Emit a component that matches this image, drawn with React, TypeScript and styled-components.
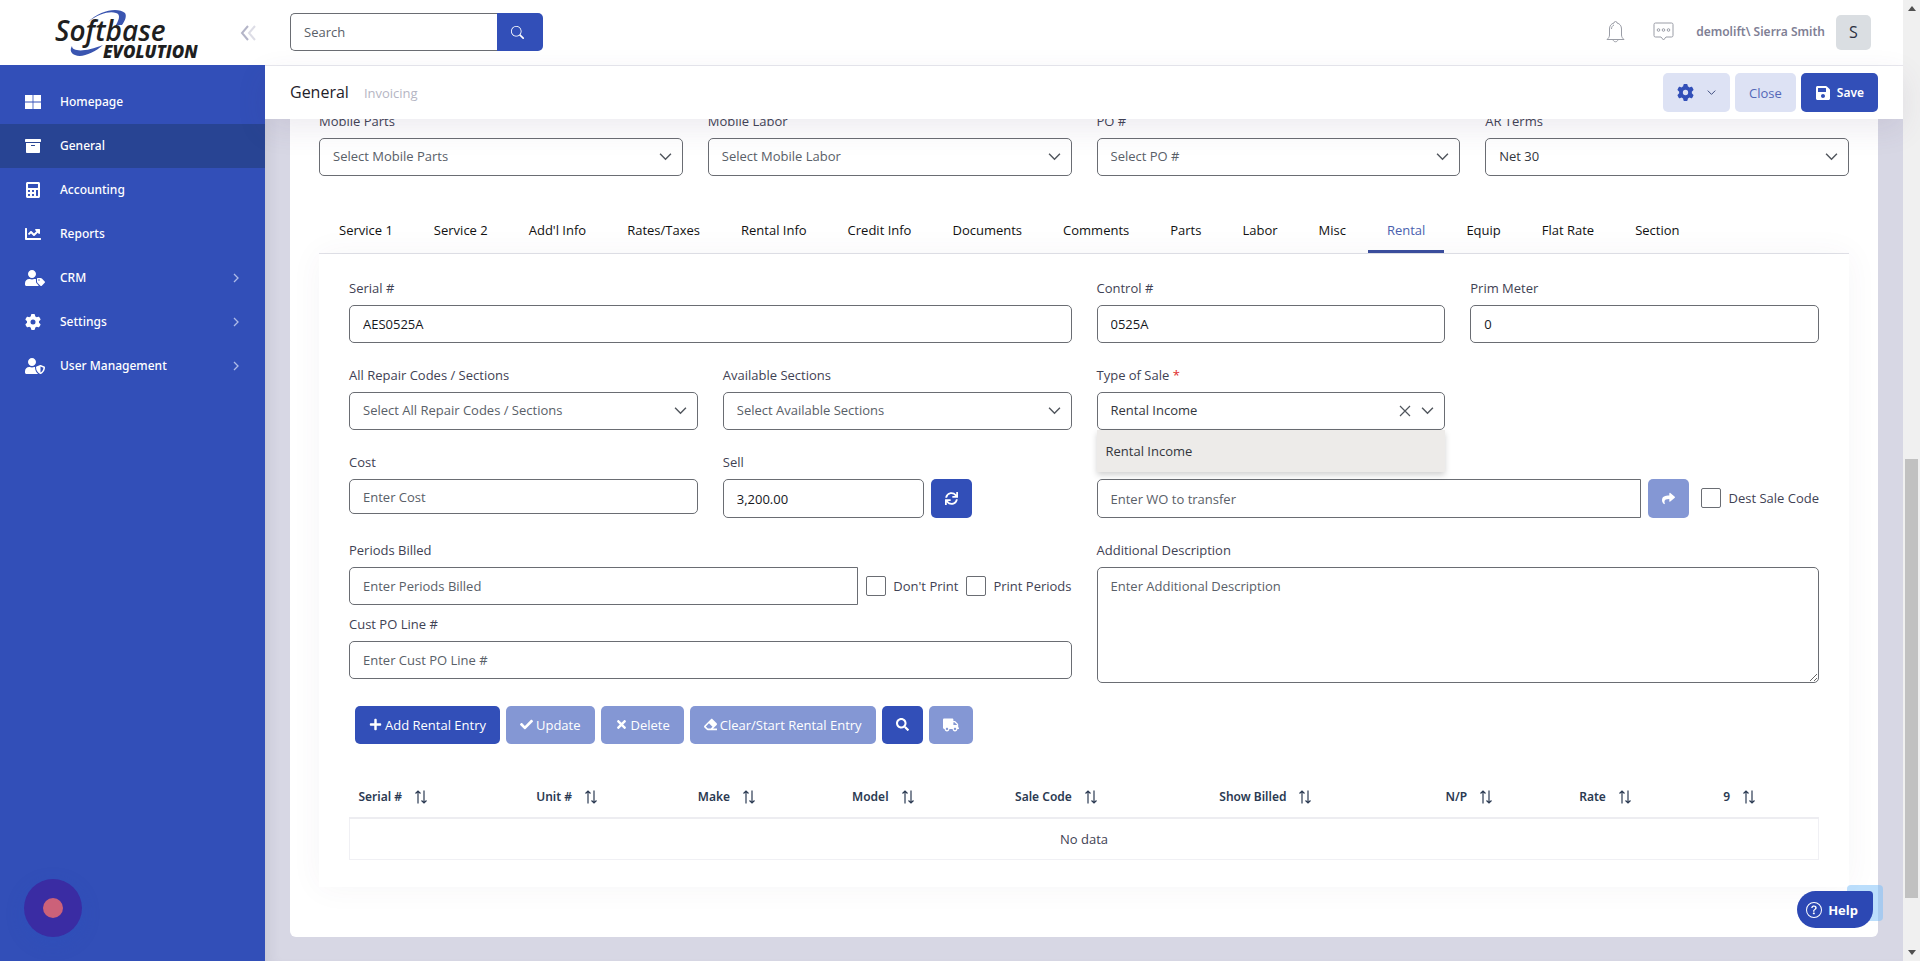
import React from 'react';
import styled, { createGlobalStyle, css } from 'styled-components';
import {
  FaArchive, FaCalculator, FaChartLine, FaUserTag, FaUserShield, FaSave, FaSync, FaShare,
  FaPlus, FaCheck, FaTimes, FaEraser, FaSearch, FaTruck,
} from 'react-icons/fa';
import { FaGear } from 'react-icons/fa6';
import { BsSearch, BsQuestionCircle } from 'react-icons/bs';

const color = {
  primary: '#324fb8',
  primaryDark: '#284493',
  disabled: '#8497d4',
  light: '#dde2f4',
  page: '#d7d7e4',
  ink: '#3f4254',
  muted: '#596068',
  line: '#6a6d73',
};

const GlobalStyle = createGlobalStyle`
  * { box-sizing: border-box; }
  body {
    margin: 0;
    background: ${color.page};
    color: ${color.ink};
    font: 13px/20px 'Open Sans', 'Noto Sans', sans-serif;
  }
  button, input, select, textarea { font: inherit; margin: 0; }
  button { cursor: pointer; }
  a { color: inherit; text-decoration: none; }
`;

const Shell = styled.div`
  display: grid;
  grid-template-columns: 265px minmax(0, 1fr) 17px;
  grid-template-rows: minmax(0, 1fr);
  height: 100vh;
  overflow: hidden;
`;

/* ---------- sidebar ---------- */

const Sidebar = styled.aside`
  background: ${color.primary};
`;

const Brand = styled.div`
  display: flex;
  align-items: center;
  justify-content: space-between;
  height: 65px;
  padding: 0 9px 0 50px;
  background: #fff;
`;

const CollapseButton = styled.button`
  display: flex;
  padding: 0;
  border: 0;
  background: none;
`;

const Nav = styled.nav`
  padding-top: 15px;
`;

const NavLink = styled.a<{ $active?: boolean }>`
  display: grid;
  grid-template-columns: 35px 1fr auto;
  align-items: center;
  height: 44px;
  padding: 0 26px 0 25px;
  background: ${(p) => (p.$active ? color.primaryDark : 'transparent')};
  font: 500 12px/20px 'Noto Sans', sans-serif;

  && { color: #fff; }
`;

const RecordButton = styled.button`
  position: fixed;
  left: 24px;
  bottom: 24px;
  display: grid;
  place-items: center;
  width: 58px;
  height: 58px;
  border: 0;
  border-radius: 50%;
  background: #3a2ca3;
  box-shadow: 0 6px 18px rgba(40, 80, 190, 0.25);
`;

const RecordDot = styled.span`
  width: 20px;
  height: 20px;
  border-radius: 50%;
  background: #cc6179;
`;

/* ---------- header ---------- */

const Main = styled.main`
  display: grid;
  grid-template-rows: 66px 53px minmax(0, 1fr);
  box-shadow: inset 12px 0 14px -10px rgba(60, 60, 90, 0.12);
`;

const Header = styled.header`
  display: flex;
  align-items: center;
  justify-content: space-between;
  padding: 0 32px 1px 25px;
  border-bottom: 1px solid #e8e8ee;
  background: #fff;
`;

const SearchForm = styled.form`
  display: flex;
  width: 253px;
  height: 38px;
`;

const SearchInput = styled.input`
  flex: 1;
  min-width: 0;
  padding: 0 13px;
  border: 1px solid ${color.line};
  border-right: 0;
  border-radius: 5px 0 0 5px;
  outline: 0;
  &::placeholder { color: ${color.muted}; opacity: 1; }
`;

const SearchButton = styled.button`
  display: grid;
  place-items: center;
  width: 46px;
  padding: 0 6px 0 0;
  border: 0;
  border-radius: 0 5px 5px 0;
  background: ${color.primary};
  color: #fff;
`;

const UserArea = styled.div`
  display: flex;
  align-items: center;
`;

const IconButton = styled.button`
  display: flex;
  margin-right: 28px;
  padding: 0;
  border: 0;
  background: none;
  & + & { margin-right: 22px; }
`;

const UserName = styled.span`
  color: #7f7f95;
  font: 600 12px/20px 'Noto Sans', sans-serif;
`;

const Avatar = styled.button`
  width: 35px;
  height: 35px;
  margin-left: 11px;
  padding: 0;
  border: 0;
  border-radius: 5px;
  background: #dadee2;
  color: #2b3040;
  font-size: 16px;
`;

const Toolbar = styled.div`
  position: relative;
  z-index: 1;
  display: flex;
  align-items: center;
  justify-content: space-between;
  padding: 0 25px;
  background: #fff;
  box-shadow: 0 10px 30px rgba(82, 63, 105, 0.1);
`;

const Crumbs = styled.div`
  display: flex;
  align-items: baseline;
  gap: 15px;
`;

const PageTitle = styled.h1`
  margin: 0;
  color: #1e2129;
  font-size: 16px;
  font-weight: 400;
`;

const Crumb = styled.a`
  && { color: #b5b5c3; }
  font-weight: 500;
`;

const ToolbarActions = styled.div`
  display: flex;
  gap: 5px;
`;

const Button = styled.button<{ $tone?: 'primary' | 'light'; $square?: boolean }>`
  display: inline-flex;
  align-items: center;
  justify-content: center;
  gap: ${(p) => (p.$tone === 'light' ? 13 : 3)}px;
  height: 39px;
  padding: 0 14px;
  border: 0;
  border-radius: 5px;
  background: ${color.primary};
  color: #fff;
  font-weight: 500;
  white-space: nowrap;

  ${(p) => p.$square && css`
    flex: none;
    width: 41px;
    padding: 0;
  `}
  ${(p) => p.$tone === 'light' && css`
    background: ${color.light};
    color: #5468b8;
  `}
  &:disabled { background: ${color.disabled}; color: #fff; cursor: default; }
`;

const SaveButton = styled(Button)`
  gap: 6px;
  font: 600 12px/20px 'Noto Sans', sans-serif;
`;

/* ---------- content ---------- */

const Viewport = styled.div`
  display: flex;
  flex-direction: column;
  justify-content: flex-end;
  overflow: hidden;
  padding: 0 25px 24px;
`;

const Card = styled.section`
  flex: none;
  padding: 24px 29px 50px;
  border-radius: 6px;
  background: #fff;
`;

const FormGrid = styled.div`
  display: grid;
  grid-template-columns: repeat(4, minmax(0, 1fr));
  gap: 22px 25px;
`;

const Field = styled.div<{ $span?: number; $end?: boolean }>`
  position: relative;
  display: flex;
  flex-direction: column;
  grid-column: span ${(p) => p.$span ?? 1};
  justify-content: ${(p) => (p.$end ? 'flex-end' : 'flex-start')};
`;

const Label = styled.label`
  margin-bottom: 7px;
  line-height: 20px;
`;

const Required = styled.span`
  color: #e02b2b;
`;

const control = css`
  width: 100%;
  border: 1px solid ${color.line};
  border-radius: 5px;
  outline: 0;
  background: #fff;
`;

const TextInput = styled.input<{ $size?: number; $flush?: boolean }>`
  ${control}
  height: ${(p) => p.$size ?? 38}px;
  padding: 1px 13px 0;
  color: #16181d;
  ${(p) => p.$flush && css`
    border-top-right-radius: 0;
    border-bottom-right-radius: 0;
  `}
  &::placeholder { color: ${color.muted}; opacity: 1; }
`;

const TextArea = styled.textarea`
  ${control}
  display: block;
  height: 116px;
  padding: 8px 13px;
  color: #16181d;
  resize: vertical;
  &::placeholder { color: ${color.muted}; opacity: 1; }
`;

const SelectWrap = styled.div`
  position: relative;
  display: flex;
`;

const Select = styled.select<{ $filled?: boolean }>`
  ${control}
  height: 38px;
  padding: 0 36px 1px 13px;
  color: ${(p) => (p.$filled ? '#33363d' : color.muted)};
  appearance: none;
`;

const SelectIcons = styled.div`
  position: absolute;
  top: 0;
  right: 11px;
  display: flex;
  align-items: center;
  gap: 10px;
  height: 38px;
  pointer-events: none;
`;

const ClearButton = styled.button`
  display: flex;
  padding: 0;
  border: 0;
  background: none;
  pointer-events: auto;
`;

const Options = styled.ul`
  position: absolute;
  z-index: 2;
  top: 100%;
  left: 0;
  right: 0;
  margin: 0;
  padding: 0;
  background: #edebe9;
  box-shadow: 0 3px 6px rgba(0, 0, 0, 0.18);
  list-style: none;
`;

const Option = styled.li`
  padding: 11px 9px;
  color: #33363d;
`;

const Tabs = styled.div`
  display: flex;
  gap: 3px;
  margin-top: 32px;
  padding-left: 1px;
  border-bottom: 1px solid #e1e2e8;
`;

const Tab = styled.button<{ $active?: boolean }>`
  height: 45px;
  padding: 3px 19px 0;
  border: 0;
  border-bottom: 3px solid ${(p) => (p.$active ? '#3a4d9c' : 'transparent')};
  background: none;
  color: ${(p) => (p.$active ? '#4a5fae' : '#111')};
  white-space: nowrap;
`;

const Panel = styled.div`
  padding: 24px 30px 27px;
  box-shadow: 0 0 30px rgba(82, 63, 105, 0.05);
`;

const Inline = styled.div<{ $gap: number }>`
  display: flex;
  flex: 1;
  align-items: center;
  gap: ${(p) => p.$gap}px;
`;

const SellGroup = styled(Inline)`
  width: 249px;
`;

const TransferRow = styled(Inline)`
  flex: none;
`;

const Check = styled.label`
  display: flex;
  flex: none;
  align-items: center;
  gap: 7px;
`;

const CheckBox = styled.input`
  width: 20px;
  height: 20px;
  border: 1px solid ${color.line};
  border-radius: 2px;
  background: #fff;
  appearance: none;
`;

const Stack = styled.div`
  display: flex;
  flex-direction: column;
  grid-column: span 2;
  gap: 9px;
`;

const Actions = styled.div`
  display: flex;
  gap: 6px;
  margin: 23px 6px 33px;

  ${Button} { height: 38px; }
`;

const Table = styled.table`
  width: 100%;
  border-collapse: collapse;
  table-layout: fixed;
`;

const Col = styled.col<{ $share: number }>`
  width: ${(p) => p.$share}%;
`;

const Th = styled.th`
  height: 41px;
  padding: 0 9px;
  border-bottom: 2px solid #ededf1;
  color: #2b3a52;
  font: 600 12px/20px 'Noto Sans', sans-serif;
  text-align: left;
`;

const SortButton = styled.button`
  display: inline-flex;
  align-items: center;
  gap: 12px;
  padding: 0;
  border: 0;
  background: none;
  color: inherit;
`;

const Empty = styled.td`
  height: 42px;
  padding: 0;
  border: 1px solid #f0f0f4;
  text-align: center;
`;

/* ---------- overlays ---------- */

const HelpWrap = styled.div`
  position: fixed;
  right: 47px;
  bottom: 33px;
  z-index: 3;

  &::before {
    content: '';
    position: absolute;
    top: -6px;
    right: -10px;
    width: 36px;
    height: 36px;
    border-radius: 4px;
    background: rgba(120, 190, 250, 0.5);
  }
`;

const HelpButton = styled.button`
  position: relative;
  display: flex;
  align-items: center;
  gap: 6px;
  height: 37px;
  padding: 0 15px 0 9px;
  border: 0;
  border-radius: 19px 4px 19px 19px;
  background: #2c48b4;
  color: #fff;
  font-weight: 700;
`;

const ScrollTrack = styled.div`
  display: flex;
  flex-direction: column;
  align-items: center;
  justify-content: space-between;
  padding: 6px 0;
  background: #f0f0f0;
`;

const ScrollRail = styled.div`
  display: grid;
  flex: 1;
  grid-template-rows: 448fr 439fr 52fr;
  width: 13px;
`;

const ScrollThumb = styled.div`
  grid-row: 2;
  background: #c1c1c1;
`;

/* ---------- drawings ---------- */

const Logo = () => (
  <svg width="156" height="62" viewBox="0 0 156 62" role="img" aria-label="Softbase Evolution">
    <path d="M38 20C50 8 68 5 75 11c2 3 0 8-3 12h-6c4-7 4-11 0-12-6-2-16 0-28 9z" fill="#3a55b0" />
    <path d="M22 44c0 6 14 6 31-1-9 8-21 13-28 10-5-2-5-6-3-9z" fill="#3a55b0" />
    <text x="5" y="39" fontFamily="'Open Sans', sans-serif" fontSize="28" fontWeight="600" fontStyle="italic" fill="#1f1f1f">Softbase</text>
    <text x="53" y="56" fontFamily="'Open Sans', sans-serif" fontSize="17" fontWeight="800" fontStyle="italic" fill="#1f1f1f">EVOLUTION</text>
  </svg>
);

const Collapse = () => (
  <svg width="16" height="16" viewBox="0 0 16 16" fill="none" strokeWidth="2">
    <path d="M8 1L2 8l6 7" stroke="#b4b5c8" />
    <path d="M15 1L9 8l6 7" stroke="#dddde6" />
  </svg>
);

const GridIcon = () => (
  <svg width="16" height="14" viewBox="0 0 16 14" fill="#fff">
    <path d="M0 0h7.600v6.600H0zM8.400 0H16v6.600H8.400zM0 7.400h7.600V14H0zM8.400 7.400H16V14H8.400z" />
  </svg>
);

const Chevron = ({ stroke = '#50555c', w = 13 }: { stroke?: string; w?: number }) => (
  <svg width={w} height={w} viewBox="0 0 12 12" fill="none" stroke={stroke} strokeWidth="1.300">
    <path d="M1 3.500l5 5 5-5" />
  </svg>
);

const ChevronRight = () => (
  <svg width="6" height="10" viewBox="0 0 6 10" fill="none" stroke="#aebbe8" strokeWidth="1.300">
    <path d="M1 1l4 4-4 4" />
  </svg>
);

const Cross = () => (
  <svg width="12" height="12" viewBox="0 0 12 12" fill="none" stroke="#50555c" strokeWidth="1.200">
    <path d="M1 1l10 10M11 1L1 11" />
  </svg>
);

const Bell = () => (
  <svg width="19" height="22" viewBox="0 0 19 22" fill="none" stroke="#9a9da6" strokeWidth="1">
    <path d="M8 2a1.500 1.500 0 0 1 3 0c3 .7 4.500 3 4.500 6v6c0 2 1 3 2.500 4.500H1C2.500 17 3.500 16 3.500 14V8c0-3 1.500-5.300 4.500-6zM7 18.500c.5 3 4.500 3 5 0M5.500 8c0-2 1-3.500 2.500-4" />
  </svg>
);

const Chat = () => (
  <svg width="21" height="20" viewBox="0 0 21 20" fill="none" stroke="#9a9da6" strokeWidth="1">
    <path d="M2.500 1h16A1.500 1.500 0 0 1 20 2.500v11a1.500 1.500 0 0 1-1.500 1.500H13l-2.500 3L8 15H2.500A1.500 1.500 0 0 1 1 13.500v-11A1.500 1.500 0 0 1 2.500 1z" />
    <circle cx="5.500" cy="8" r="1.300" /><circle cx="10.500" cy="8" r="1.300" /><circle cx="15.500" cy="8" r="1.300" />
  </svg>
);

const Sort = () => (
  <svg width="14" height="14" viewBox="0 0 14 14" fill="none" stroke="#2b3a52" strokeWidth="1.200">
    <path d="M4 13.500V1M1.500 3.500L4 1l2.500 2.500M10 .5V13M7.500 10.500L10 13l2.500-2.500" />
  </svg>
);

const Arrow = ({ down }: { down?: boolean }) => (
  <svg width="8" height="5" viewBox="0 0 8 5" fill="#505050">
    <path d={down ? 'M0 0h8L4 5z' : 'M0 5h8L4 0z'} />
  </svg>
);

/* ---------- parts ---------- */

const navItems = [
  { name: 'Homepage', icon: <GridIcon /> },
  { name: 'General', icon: <FaArchive size={16} />, active: true },
  { name: 'Accounting', icon: <FaCalculator size={16} /> },
  { name: 'Reports', icon: <FaChartLine size={16} /> },
  { name: 'CRM', icon: <FaUserTag size={20} />, more: true },
  { name: 'Settings', icon: <FaGear size={16} />, more: true },
  { name: 'User Management', icon: <FaUserShield size={20} />, more: true },
];

const tabs = [
  'Service 1', 'Service 2', "Add'l Info", 'Rates/Taxes', 'Rental Info', 'Credit Info', 'Documents',
  'Comments', 'Parts', 'Labor', 'Misc', 'Rental', 'Equip', 'Flat Rate', 'Section',
];

const columns: [string, number][] = [
  ['Serial #', 12.1], ['Unit #', 11], ['Make', 10.5], ['Model', 11.1], ['Sale Code', 13.9],
  ['Show Billed', 15.4], ['N/P', 9.1], ['Rate', 9.8], ['9', 7.1],
];

function SelectField({ id, label, value, filled }: { id: string; label: string; value: string; filled?: boolean }) {
  return (
    <Field>
      <Label htmlFor={id}>{label}</Label>
      <SelectWrap>
        <Select id={id} $filled={filled}><option>{value}</option></Select>
        <SelectIcons><Chevron /></SelectIcons>
      </SelectWrap>
    </Field>
  );
}

function InputField(p: { id: string; label: string; value?: string; placeholder?: string; span?: number; size?: number }) {
  return (
    <Field $span={p.span}>
      <Label htmlFor={p.id}>{p.label}</Label>
      <TextInput id={p.id} defaultValue={p.value} placeholder={p.placeholder} $size={p.size} />
    </Field>
  );
}

export default function App() {
  return (
    <Shell>
      <GlobalStyle />
      <Sidebar>
        <Brand>
          <Logo />
          <CollapseButton aria-label="Collapse menu"><Collapse /></CollapseButton>
        </Brand>
        <Nav>
          {navItems.map((n) => (
            <NavLink key={n.name} href="#" $active={n.active}>
              {n.icon}
              {n.name}
              {n.more && <ChevronRight />}
            </NavLink>
          ))}
        </Nav>
        <RecordButton aria-label="Record"><RecordDot /></RecordButton>
      </Sidebar>

      <Main>
        <Header>
          <SearchForm>
            <SearchInput aria-label="Search" placeholder="Search" />
            <SearchButton type="button" aria-label="Run search"><BsSearch size={13} /></SearchButton>
          </SearchForm>
          <UserArea>
            <IconButton aria-label="Notifications"><Bell /></IconButton>
            <IconButton aria-label="Messages"><Chat /></IconButton>
            <UserName>demolift\ Sierra Smith</UserName>
            <Avatar>S</Avatar>
          </UserArea>
        </Header>

        <Toolbar>
          <Crumbs>
            <PageTitle>General</PageTitle>
            <Crumb href="#">Invoicing</Crumb>
          </Crumbs>
          <ToolbarActions>
            <Button $tone="light" aria-label="Options">
              <FaGear size={17} color={color.primary} />
              <Chevron stroke="#3c4a7c" w={9} />
            </Button>
            <Button $tone="light">Close</Button>
            <SaveButton><FaSave size={16} />Save</SaveButton>
          </ToolbarActions>
        </Toolbar>

        <Viewport>
          <Card>
            <FormGrid>
              <SelectField id="mobile-parts" label="Mobile Parts" value="Select Mobile Parts" />
              <SelectField id="mobile-labor" label="Mobile Labor" value="Select Mobile Labor" />
              <SelectField id="po" label="PO #" value="Select PO #" />
              <SelectField id="ar-terms" label="AR Terms" value="Net 30" filled />
            </FormGrid>

            <Tabs role="tablist">
              {tabs.map((t) => (
                <Tab key={t} role="tab" aria-selected={t === 'Rental'} $active={t === 'Rental'}>{t}</Tab>
              ))}
            </Tabs>

            <Panel role="tabpanel">
              <FormGrid>
                <InputField id="serial" label="Serial #" value="AES0525A" span={2} />
                <InputField id="control" label="Control #" value="0525A" />
                <InputField id="meter" label="Prim Meter" value="0" />

                <SelectField id="repair" label="All Repair Codes / Sections" value="Select All Repair Codes / Sections" />
                <SelectField id="sections" label="Available Sections" value="Select Available Sections" />
                <Field>
                  <Label htmlFor="sale-type">Type of Sale <Required>*</Required></Label>
                  <SelectWrap>
                    <Select id="sale-type" $filled><option>Rental Income</option></Select>
                    <SelectIcons>
                      <ClearButton aria-label="Clear type of sale"><Cross /></ClearButton>
                      <Chevron />
                    </SelectIcons>
                  </SelectWrap>
                  <Options role="listbox" aria-label="Type of sale">
                    <Option role="option" aria-selected>Rental Income</Option>
                  </Options>
                </Field>
                <Field />

                <InputField id="cost" label="Cost" placeholder="Enter Cost" size={35} />
                <Field>
                  <Label htmlFor="sell">Sell</Label>
                  <SellGroup $gap={7}>
                    <TextInput id="sell" defaultValue="3,200.00" $size={39} />
                    <Button $square aria-label="Refresh"><FaSync size={13} /></Button>
                  </SellGroup>
                </Field>
                <Field $span={2} $end>
                  <TransferRow $gap={12}>
                    <Inline $gap={7}>
                      <TextInput aria-label="WO to transfer" placeholder="Enter WO to transfer" $size={39} $flush />
                      <Button $square disabled aria-label="Transfer"><FaShare size={13} /></Button>
                    </Inline>
                    <Check><CheckBox type="checkbox" />Dest Sale Code</Check>
                  </TransferRow>
                </Field>

                <Stack>
                  <Field>
                    <Label htmlFor="periods">Periods Billed</Label>
                    <Inline $gap={8}>
                      <TextInput id="periods" placeholder="Enter Periods Billed" $flush />
                      <Check><CheckBox type="checkbox" />Don't Print</Check>
                      <Check><CheckBox type="checkbox" />Print Periods</Check>
                    </Inline>
                  </Field>
                  <InputField id="cust-po" label="Cust PO Line #" placeholder="Enter Cust PO Line #" />
                </Stack>
                <Field $span={2}>
                  <Label htmlFor="description">Additional Description</Label>
                  <TextArea id="description" placeholder="Enter Additional Description" />
                </Field>
              </FormGrid>

              <Actions>
                <Button><FaPlus size={13} />Add Rental Entry</Button>
                <Button disabled><FaCheck size={13} />Update</Button>
                <Button disabled><FaTimes size={13} />Delete</Button>
                <Button disabled><FaEraser size={13} />Clear/Start Rental Entry</Button>
                <Button $square aria-label="Find"><FaSearch size={13} /></Button>
                <Button disabled aria-label="Deliver"><FaTruck size={16} /></Button>
              </Actions>

              <Table>
                <colgroup>
                  {columns.map(([name, share]) => <Col key={name} $share={share} />)}
                </colgroup>
                <thead>
                  <tr>
                    {columns.map(([name]) => (
                      <Th key={name} scope="col"><SortButton>{name}<Sort /></SortButton></Th>
                    ))}
                  </tr>
                </thead>
                <tbody>
                  <tr><Empty colSpan={columns.length}>No data</Empty></tr>
                </tbody>
              </Table>
            </Panel>
          </Card>
        </Viewport>
      </Main>

      <ScrollTrack>
        <Arrow />
        <ScrollRail><ScrollThumb /></ScrollRail>
        <Arrow down />
      </ScrollTrack>

      <HelpWrap>
        <HelpButton><BsQuestionCircle size={16} />Help</HelpButton>
      </HelpWrap>
    </Shell>
  );
}
